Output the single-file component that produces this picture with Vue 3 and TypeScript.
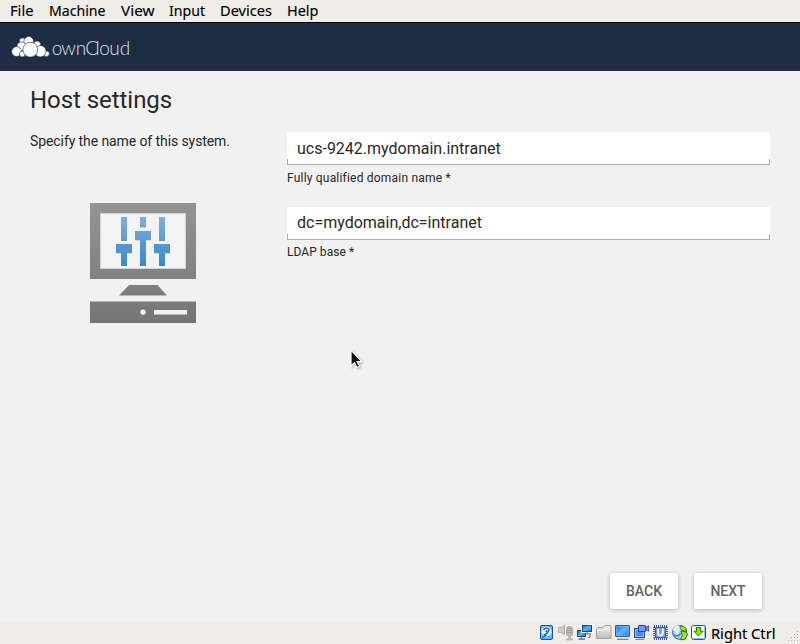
<script setup lang="ts">
import { ref } from 'vue'

interface MenuItem {
  id: string
  label: string
  width: number
}

const menu: MenuItem[] = [
  { id: 'file', label: 'File', width: 23.5 },
  { id: 'machine', label: 'Machine', width: 56.5 },
  { id: 'view', label: 'View', width: 33.5 },
  { id: 'input', label: 'Input', width: 36 },
  { id: 'devices', label: 'Devices', width: 52 },
  { id: 'help', label: 'Help', width: 31.5 },
]

const fqdn = ref('ucs-9242.mydomain.intranet')
const ldapBase = ref('dc=mydomain,dc=intranet')
</script>

<template>
  <div class="window">
    <nav class="menubar">
      <svg class="menu-item" v-for="item in menu" :key="item.id" :class="item.id" height="22">
        <text x="0" y="16" :textLength="item.width" lengthAdjust="spacingAndGlyphs">{{ item.label }}</text>
      </svg>
    </nav>

    <header class="brand">
      <svg width="140" height="48" viewBox="0 23 140 48">
        <g fill="#fff" stroke="#1e2d44" stroke-width=".6">
          <circle cx="22.5" cy="41" r="3.1" />
          <circle cx="37" cy="44.5" r="3.6" />
          <circle cx="28.7" cy="41.3" r="4.8" />
          <circle cx="21.5" cy="46.5" r="4.6" />
          <circle cx="16.6" cy="51.6" r="4.9" />
          <circle cx="22.3" cy="54" r="2.9" />
          <circle cx="46.5" cy="53.7" r="2.8" />
          <circle cx="40.3" cy="51.2" r="5.7" />
          <circle cx="30.3" cy="49.7" r="7.4" />
        </g>
        <text class="logo-text" x="51.7 61.2 75.8 85.2 95.6 99.2 109.3 119.7" y="54.7">ownCloud</text>
      </svg>
    </header>

    <main class="page">
      <h1>Host settings</h1>
      <div class="columns">
        <aside>
          <p>Specify the name of this system.</p>
          <svg class="computer" width="106" height="120" viewBox="90 203 106 120">
            <defs>
              <linearGradient id="gray" gradientUnits="userSpaceOnUse" x1="0" y1="203" x2="0" y2="323">
                <stop offset="0" stop-color="#949494" />
                <stop offset="1" stop-color="#757575" />
              </linearGradient>
              <linearGradient id="blue" gradientUnits="userSpaceOnUse" x1="0" y1="217" x2="0" y2="266">
                <stop offset="0" stop-color="#7eaedb" />
                <stop offset="1" stop-color="#3b87c8" />
              </linearGradient>
            </defs>
            <path fill="url(#gray)" fill-rule="evenodd" d="M90 203h106v76H90zM100 213v56h86v-56z" />
            <rect x="100.5" y="213.5" width="85" height="55" fill="#f3f3f3" stroke="#d2d2d2" />
            <path fill="url(#gray)" d="M129 285h28.5l9.5 10.5H119zM90 301.5h106V323H90z" />
            <circle cx="143" cy="312.2" r="2.6" fill="#f1f1f1" />
            <path fill="#f1f1f1" d="M154 310h33v4.6h-33z" />
            <path fill="url(#blue)" d="M121 217h6v24h-6zM140 217h6v10.5h-6zM159 217h6v24h-6zM116 244h16v9.3h-5V266h-6v-12.7h-5zM135 231h16v9.3h-5V266h-6v-25.7h-5zM154 244h16v9.3h-5V266h-6v-12.7h-5z" />
          </svg>
        </aside>
        <form @submit.prevent>
          <div class="field">
            <input id="fqdn" v-model="fqdn" type="text" spellcheck="false" />
            <label for="fqdn">Fully qualified domain name *</label>
          </div>
          <div class="field base">
            <input id="ldap" v-model="ldapBase" type="text" spellcheck="false" />
            <label for="ldap">LDAP base *</label>
          </div>
        </form>
      </div>
      <div class="actions">
        <button type="button">BACK</button>
        <button type="button">NEXT</button>
      </div>
    </main>

    <footer class="statusbar">
      <svg class="devices-icons" width="171" height="22" viewBox="537 622 171 22">
        <defs>
          <linearGradient id="screen" x1="0" y1="0" x2="1" y2="1">
            <stop offset="0" stop-color="#1569d8" />
            <stop offset=".5" stop-color="#64b0fb" />
            <stop offset="1" stop-color="#0d72e5" />
          </linearGradient>
          <linearGradient id="folder" x1="0" y1="0" x2="0" y2="1">
            <stop offset="0" stop-color="#eee" />
            <stop offset="1" stop-color="#bdbdbd" />
          </linearGradient>
        </defs>
        <!-- hard disk -->
        <g>
          <rect x="540.5" y="625.5" width="12" height="14" rx="1.5" fill="#65b7f7" stroke="#0b55ae" />
          <circle cx="546.5" cy="631.5" r="5" fill="#e6f5ff" />
          <path d="M543.5 630q2.8-3.3 5.5-.7-.2 3.8-5.3 5.8" fill="none" stroke="#1765b7" stroke-width="1.4" />
          <circle cx="546.6" cy="631.3" r="1.1" fill="#1765b7" />
          <path d="M542.2 637.7l4.5-3" stroke="#1765b7" stroke-width="1.2" />
        </g>
        <!-- audio -->
        <g stroke="#aaa" stroke-width=".9" fill="#ccc">
          <path d="M558.5 627.5h3l3-2.5v10l-3-2.5h-3z" />
          <path d="M566.5 628.5q0-2 3-2t3 2v5.5q0 2-2.2 2.3v2.7h2v1h-5.6v-1h2v-2.7q-2.2-.3-2.2-2.3z" fill="#bbb" />
          <path d="M567 628.5h5M567 630.5h5M567 632.5h5" stroke="#999" />
        </g>
        <!-- network -->
        <g>
          <path d="M577.5 630.5h8v6h-8z" fill="url(#screen)" />
          <path d="M577.5 630.5h8v6h-8z" fill="none" stroke="#174b87" />
          <path d="M578.5 639.3h6.5M581.5 637v2" stroke="#747d85" stroke-width="1.4" />
          <rect x="582.5" y="625.5" width="9" height="6" fill="url(#screen)" stroke="#fff" stroke-width="3" />
          <rect x="582.5" y="625.5" width="9" height="6" fill="url(#screen)" stroke="#174b87" />
          <path d="M583.5 634h7.5M587 632v2M588 637.5h2v-3" fill="none" stroke="#68747e" />
        </g>
        <!-- shared folder -->
        <g fill="url(#folder)" stroke="#a0a0a0">
          <path d="M596.5 638.5v-9.5l1.2-1.5h5l2-2h5q1.3 0 1.3 1.3v11.7z" />
          <path d="M597.5 630.5h6l1.5-1.5h5" fill="none" stroke="#f7f7f7" />
        </g>
        <!-- display -->
        <g>
          <rect x="615.5" y="625.5" width="14" height="11" rx=".5" fill="url(#screen)" stroke="#2459a0" />
          <path d="M616.5 626.5h12v9h-12z" fill="none" stroke="#6bb3f3" stroke-width=".7" />
          <path d="M617 639.3h11.5" stroke="#888" stroke-width="1.4" />
        </g>
        <!-- recording -->
        <g>
          <rect x="634.5" y="628.5" width="10" height="9" fill="#3f8ff0" stroke="#26577d" />
          <path d="M635.5 629.5h8v7h-8z" fill="none" stroke="#9bcef8" stroke-width=".8" />
          <path d="M635.5 639.3h9" stroke="#888" stroke-width="1.3" />
          <rect x="638.5" y="625.5" width="7" height="6" rx=".5" fill="#7896f2" stroke="#2641a8" />
          <path d="M645.8 627.5l2.7-1.8v5.6l-2.7-1.8z" fill="#718feb" stroke="#2641a8" stroke-width=".8" />
        </g>
        <!-- processor -->
        <g>
          <rect x="654" y="626" width="13" height="13" fill="#f2f4ff" stroke="#4159bd" stroke-width="2" stroke-dasharray="1 1" />
          <rect x="655.5" y="627.5" width="10" height="10" fill="#8298df" stroke="#4159bd" />
          <path d="M658.2 628.5v4.5q0 2.6 2.3 2.6t2.3-2.6v-4.5" fill="none" stroke="#fff" stroke-width="1.8" />
        </g>
        <!-- mouse integration -->
        <g>
          <circle cx="679.5" cy="632.4" r="6.9" fill="#a5d7f5" stroke="#2065a1" />
          <path d="M673.8 630.5q3-5 6-3.5l-3 5 2 2.5" fill="none" stroke="#fff" stroke-width="2.3" />
          <path d="M673.5 635q4.5 2.5 7-1.5" fill="none" stroke="#3d83c8" stroke-width="1.6" />
          <path d="M680 625.8l3.8.7q2.7 1.8 2.7 4.5h-2.7q-2.5-1-3.8-2.5zM681 631l5.2 1 1.4 2.4-2.8 5.2h-4.3l1.8-4z" fill="#9be52b" stroke="#2c711b" stroke-width="1" />
        </g>
        <!-- keyboard capture -->
        <g>
          <rect x="691.5" y="625.5" width="14" height="14" rx="2" fill="#fff" stroke="#175a91" />
          <path d="M693 638.5h11.5V627" fill="none" stroke="#91bfe0" />
          <path d="M696.5 627.5h4v3.8h2.6l-4.6 4.7-4.6-4.7h2.6z" fill="#8deb00" stroke="#287500" />
        </g>
      </svg>
      <svg class="host-key" width="68" height="22">
        <text x="0" y="17" textLength="64.5" lengthAdjust="spacingAndGlyphs">Right Ctrl</text>
      </svg>
      <svg class="grip" width="14" height="14" viewBox="0 0 14 14" fill="#b5b0aa">
        <path d="M11 1h1v1h-1zM8 4h1v1H8zM11 4h1v1h-1zM5 7h1v1H5zM8 7h1v1H8zM11 7h1v1h-1zM2 10h1v1H2zM5 10h1v1H5zM8 10h1v1H8zM11 10h1v1h-1z" />
      </svg>
    </footer>

    <svg class="cursor" width="14" height="22" viewBox="0 0 14 22">
      <path d="M1 1v16l3.5-3.3 2.4 4.8 2.6-1.3-2.3-4.5h4.6z" fill="#111" stroke="#fff" stroke-width="1.2" />
    </svg>
  </div>
</template>

<style>
body {
  margin: 0;
  overflow: hidden;
}
</style>

<style scoped>
.window {
  position: relative;
  display: flex;
  flex-direction: column;
  width: 800px;
  height: 644px;
  background: #f1f1f1;
  color: #282828;
  font-family: Roboto, sans-serif;
}
.menubar {
  display: flex;
  box-sizing: border-box;
  height: 23px;
  padding-left: 10px;
  background: #f0ece7;
  border-bottom: 1px solid #000;
}
.menu-item {
  flex-shrink: 0;
  overflow: visible;
  font: 15px "Noto Sans", sans-serif;
  fill: #000;
  stroke: #000;
  stroke-width: .15px;
}
.file { width: 39px; }
.machine { width: 72px; }
.view { width: 48px; }
.input { width: 51px; }
.devices { width: 67px; }
.help { width: 32px; }
.brand {
  height: 48px;
  background: #1e2d44;
}
.brand svg {
  display: block;
}
.logo-text {
  font: 300 19px Lato, sans-serif;
  fill: #dfe3e8;
}
.page {
  display: flex;
  flex: 1;
  flex-direction: column;
  padding: 15px 30px 13px;
}
h1 {
  margin: 0;
  font-size: 24px;
  font-weight: 400;
  line-height: 28px;
  letter-spacing: -.05px;
}
.columns {
  display: flex;
  margin-top: 18px;
}
aside {
  width: 257px;
}
p {
  margin: 0;
  font-size: 14px;
  line-height: 18px;
  letter-spacing: -.09px;
}
.computer {
  display: block;
  margin: 53px 0 0 60px;
}
form {
  flex: 1;
}
.field {
  height: 75px;
}
input {
  display: block;
  box-sizing: border-box;
  width: 100%;
  height: 33px;
  padding: 0 10px;
  border: 0;
  border-radius: 0;
  outline: 0;
  color: #282828;
  font: 16px/32px Roboto, sans-serif;
  background:
    linear-gradient(#adadad, #adadad) 0 100% / 100% 1px no-repeat,
    linear-gradient(#adadad, #adadad) 0 100% / 1px 6px no-repeat,
    linear-gradient(#adadad, #adadad) 100% 100% / 1px 6px no-repeat,
    #fff;
}
label {
  display: block;
  margin-top: 5px;
  font-size: 12px;
  line-height: 16px;
  letter-spacing: .2px;
}
.base input {
  padding-bottom: 2px;
}
.base label {
  margin-top: 4px;
  letter-spacing: .05px;
}
.actions {
  display: flex;
  justify-content: flex-end;
  gap: 16px;
  margin-top: auto;
  padding-right: 8px;
}
button {
  width: 68px;
  height: 36px;
  padding: 0;
  border: 0;
  border-radius: 2px;
  background: #fff;
  box-shadow: 0 1px 4px rgba(0, 0, 0, .26);
  color: #646464;
  font: 500 14px Roboto, sans-serif;
}
.statusbar {
  display: flex;
  height: 22px;
  padding-left: 537px;
  background: #f0ece7;
}
.devices-icons {
  flex-shrink: 0;
}
.host-key {
  flex-shrink: 0;
  margin-left: 2.5px;
  overflow: visible;
  font: 15px "Noto Sans", sans-serif;
  fill: #000;
  stroke: #000;
  stroke-width: .15px;
}
.grip {
  flex-shrink: 0;
  align-self: flex-end;
  margin-left: 7.5px;
}
.cursor {
  position: absolute;
  left: 350px;
  top: 349px;
  filter: drop-shadow(1px 1px 1px rgba(0, 0, 0, .3));
}
</style>
